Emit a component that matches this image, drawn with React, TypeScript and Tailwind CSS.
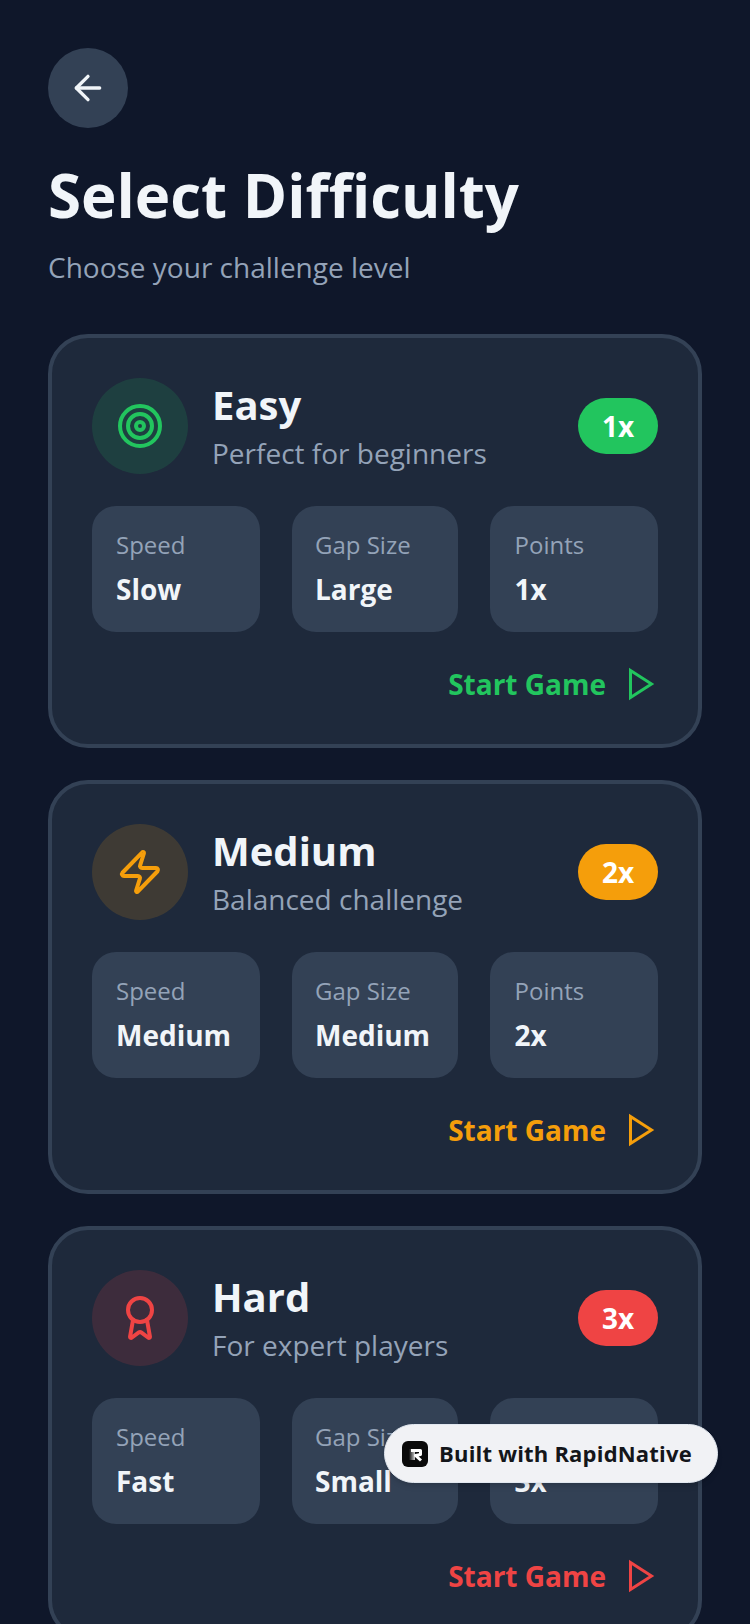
import { ArrowLeft, Target, Zap, Award } from "lucide-react";
import type { ReactNode } from "react";

interface Level {
  name: string;
  blurb: string;
  multiplier: string;
  speed: string;
  gap: string;
  icon: ReactNode;
  iconBg: string;
  badgeBg: string;
  accent: string;
}

const levels: Level[] = [
  {
    name: "Easy",
    blurb: "Perfect for beginners",
    multiplier: "1x",
    speed: "Slow",
    gap: "Large",
    icon: <Target size={48} color="#22c55e" />,
    iconBg: "bg-[#22c55e]/15",
    badgeBg: "bg-[#22c55e]",
    accent: "text-[#22c55e]",
  },
  {
    name: "Medium",
    blurb: "Balanced challenge",
    multiplier: "2x",
    speed: "Medium",
    gap: "Medium",
    icon: <Zap size={48} color="#f59e0b" />,
    iconBg: "bg-[#f59e0b]/15",
    badgeBg: "bg-[#f59e0b]",
    accent: "text-[#f59e0b]",
  },
  {
    name: "Hard",
    blurb: "For expert players",
    multiplier: "3x",
    speed: "Fast",
    gap: "Small",
    icon: <Award size={48} color="#ef4444" />,
    iconBg: "bg-[#ef4444]/15",
    badgeBg: "bg-[#ef4444]",
    accent: "text-[#ef4444]",
  },
];

function Stat({ label, value, inset }: { label: string; value: string; inset: string }) {
  return (
    <div className={`h-[126px] rounded-[24px] bg-[#334155] pt-[21px] ${inset}`}>
      <div className="text-[24px] leading-[36px] text-[#94a3b8]">{label}</div>
      <div className="mt-[5px] text-[28px] leading-[42px] font-bold text-[#f1f5f9]">{value}</div>
    </div>
  );
}

function LevelCard({ level }: { level: Level }) {
  return (
    <div className="rounded-[40px] border-4 border-[#334155] bg-[#1e293b] p-10">
      <div className="flex items-center">
        <div className={`flex h-24 w-24 items-center justify-center rounded-full ${level.iconBg}`}>
          {level.icon}
        </div>
        <div className="ml-6 flex-1">
          <div className="text-[40px] leading-[54px] font-bold text-[#f1f5f9]">{level.name}</div>
          <div className="text-[28px] leading-[42px] text-[#94a3b8]">{level.blurb}</div>
        </div>
        <div className={`flex h-14 w-20 items-center justify-center rounded-full text-[28px] font-bold text-white ${level.badgeBg}`}>
          {level.multiplier}
        </div>
      </div>
      <div className="mt-8 grid grid-cols-[168px_166px_168px] gap-8">
        <Stat label="Speed" value={level.speed} inset="pl-6" />
        <Stat label="Gap Size" value={level.gap} inset="pl-[23px]" />
        <Stat label="Points" value={level.multiplier} inset="pl-[24.5px]" />
      </div>
      <div className={`mt-8 flex h-10 items-center justify-end gap-[17px] ${level.accent}`}>
        <span className="text-[28px] leading-[40px] font-bold">Start Game</span>
        <svg className="-mr-px" width="36" height="36" viewBox="0 0 24 24" fill="none" stroke="currentColor" strokeWidth="2">
          <polygon points="5 3 19 12 5 21 5 3" />
        </svg>
      </div>
    </div>
  );
}

function RapidNativeLogo() {
  return (
    <svg width="26" height="26" viewBox="0 0 26 26">
      <defs>
        <linearGradient id="stem" x1="0" y1="0" x2="1" y2="0">
          <stop offset="0" stopColor="#0a0a0a" />
          <stop offset="1" stopColor="#d4d4d4" />
        </linearGradient>
      </defs>
      <rect width="26" height="26" rx="6" fill="#0a0a0a" />
      <rect x="7" y="8" width="6" height="11" fill="url(#stem)" />
      <path d="M9 9.5H18.5V13.5L13.5 14.5L19 19.5" fill="none" stroke="#ffffff" strokeWidth="3" strokeLinejoin="round" />
    </svg>
  );
}

export default function App() {
  return (
    <div className="relative h-[1624px] w-[750px] overflow-hidden bg-[#0f172a] px-12 pt-12 font-['Open_Sans',sans-serif]">
      <div className="flex h-20 w-20 items-center justify-center rounded-full bg-[#334155]">
        <ArrowLeft size={40} color="#f1f5f9" />
      </div>
      <h1 className="mt-7 text-[60px] leading-[78px] font-bold text-[#f1f5f9]">Select Difficulty</h1>
      <p className="mt-3 text-[28px] leading-[42px] text-[#94a3b8]">Choose your challenge level</p>
      <div className="mt-[46px] flex flex-col gap-8">
        {levels.map((level) => (
          <LevelCard key={level.name} level={level} />
        ))}
      </div>
      <div className="absolute left-[384px] top-[1424px] flex h-[59px] w-[334px] items-center gap-[11px] rounded-full border border-[#e2e8f0] bg-[#f1f2f5] pl-[17px] shadow-md">
        <RapidNativeLogo />
        <span className="text-[22px] font-bold tracking-[0.2px] text-[#14161a]">Built with RapidNative</span>
      </div>
    </div>
  );
}
